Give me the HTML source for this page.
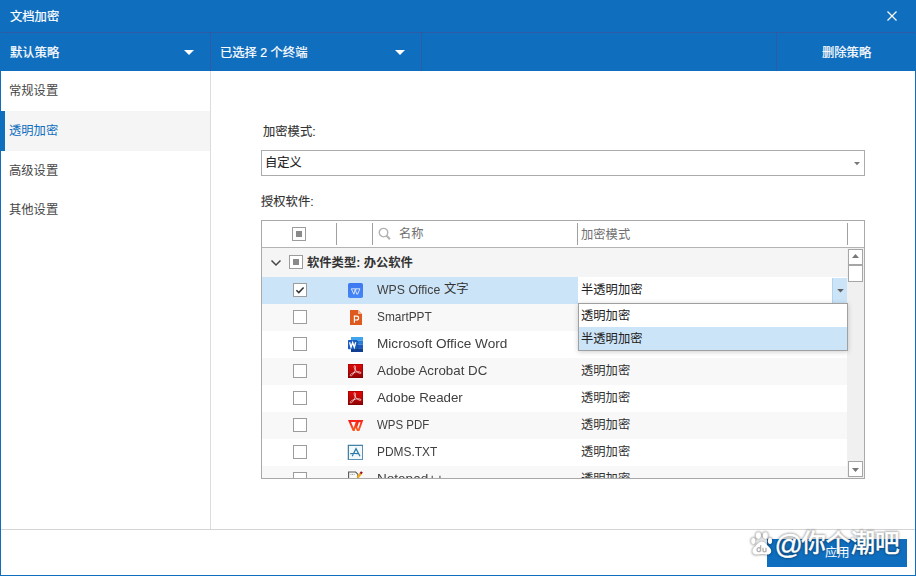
<!DOCTYPE html>
<html lang="zh-CN">
<head>
<meta charset="utf-8">
<title>文档加密</title>
<style>
html,body{margin:0;padding:0;}
body{width:916px;height:576px;overflow:hidden;background:#fff;position:relative;font-family:"Liberation Sans",sans-serif;}
.a{position:absolute;display:block;}
svg.a{overflow:visible;}
.lt{white-space:nowrap;font-family:"Liberation Sans",sans-serif;}
svg text{font-family:"Liberation Sans","Noto Sans CJK SC",sans-serif;white-space:pre;}
</style>
</head>
<body>
<div class="a" style="left:0px;top:0px;width:916px;height:71px;background:#106ebe;"></div>
<div class="a" style="left:1px;top:32px;width:914px;height:1px;background:#2d5ba6;"></div>
<div class="a" style="left:210px;top:33px;width:1px;height:38px;background:#2d5ba6;"></div>
<div class="a" style="left:421px;top:33px;width:1px;height:38px;background:#2d5ba6;"></div>
<div class="a" style="left:776px;top:33px;width:1px;height:38px;background:#2d5ba6;"></div>
<div class="a" style="left:0px;top:71px;width:1px;height:505px;background:#106ebe;"></div>
<div class="a" style="left:915px;top:71px;width:1px;height:505px;background:#106ebe;"></div>
<div class="a" style="left:0px;top:575px;width:916px;height:1px;background:#106ebe;"></div>
<svg class="a" style="left:10.0px;top:8.90px" width="50.0" height="17.2"><text x="0" y="12.3" font-size="12.3" fill="#fff" stroke="#fff" stroke-width="0.22">文档加密</text></svg>
<svg class="a" style="left:885px;top:9px" width="14" height="14"><path d="M2.5 2.5L11.5 11.5M11.5 2.5L2.5 11.5" stroke="#fff" stroke-width="1.2" fill="none"/></svg>
<svg class="a" style="left:10.0px;top:44.60px" width="50.0" height="17.2"><text x="0" y="12.3" font-size="12.3" fill="#fff" stroke="#fff" stroke-width="0.22">默认策略</text></svg>
<svg class="a" style="left:184px;top:50px" width="10" height="5"><path d="M0 0H10L5 5Z" fill="#fff"/></svg>
<svg class="a" style="left:220.0px;top:44.60px" width="89.5" height="17.2"><text x="0" y="12.3" font-size="12.3" fill="#fff" stroke="#fff" stroke-width="0.22">已选择 2 个终端</text></svg>
<svg class="a" style="left:395px;top:50px" width="10" height="5"><path d="M0 0H10L5 5Z" fill="#fff"/></svg>
<svg class="a" style="left:822.0px;top:44.60px" width="50.0" height="17.2"><text x="0" y="12.3" font-size="12.3" fill="#fff" stroke="#fff" stroke-width="0.22">删除策略</text></svg>
<div class="a" style="left:210px;top:71px;width:1px;height:458px;background:#dcdcdc;"></div>
<div class="a" style="left:1px;top:111px;width:209px;height:40px;background:#f5f5f5;"></div>
<div class="a" style="left:1px;top:111px;width:4px;height:40px;background:#106ebe;"></div>
<svg class="a" style="left:9.0px;top:83.00px" width="50.0" height="17.2"><text x="0" y="12.3" font-size="12.3" fill="#464646">常规设置</text></svg>
<svg class="a" style="left:9.0px;top:122.70px" width="50.0" height="17.2"><text x="0" y="12.3" font-size="12.3" fill="#106ebe">透明加密</text></svg>
<svg class="a" style="left:9.0px;top:162.70px" width="50.0" height="17.2"><text x="0" y="12.3" font-size="12.3" fill="#464646">高级设置</text></svg>
<svg class="a" style="left:9.0px;top:202.40px" width="50.0" height="17.2"><text x="0" y="12.3" font-size="12.3" fill="#464646">其他设置</text></svg>
<svg class="a" style="left:263.0px;top:124.00px" width="54.3" height="17.2"><text x="0" y="12.3" font-size="12.3" fill="#333" stroke="#333" stroke-width="0.12">加密模式:</text></svg>
<div class="a" style="left:261px;top:150px;width:604px;height:26px;background:#fff;border:1px solid #ababab;box-sizing:border-box;"></div>
<svg class="a" style="left:265.0px;top:155.00px" width="38.0" height="17.2"><text x="0" y="12.3" font-size="12.3" fill="#222" stroke="#222" stroke-width="0.1">自定义</text></svg>
<svg class="a" style="left:854px;top:161.8px" width="6" height="4"><path d="M0 0H6L3 3.2Z" fill="#787878"/></svg>
<svg class="a" style="left:261.0px;top:194.00px" width="54.3" height="17.2"><text x="0" y="12.3" font-size="12.3" fill="#333" stroke="#333" stroke-width="0.12">授权软件:</text></svg>
<div class="a" style="left:261px;top:220px;width:604px;height:259px;background:#fff;border:1px solid #a9a9a9;box-sizing:border-box;"></div>
<div class="a" style="left:262px;top:247px;width:602px;height:1px;background:#b4b4b4;"></div>
<div class="a" style="left:336px;top:223px;width:1px;height:22px;background:#a0a0a0;"></div>
<div class="a" style="left:372px;top:223px;width:1px;height:22px;background:#a0a0a0;"></div>
<div class="a" style="left:577px;top:223px;width:1px;height:22px;background:#a0a0a0;"></div>
<div class="a" style="left:847px;top:223px;width:1px;height:22px;background:#a0a0a0;"></div>
<svg class="a" style="left:292px;top:227px" width="14" height="14"><rect x="0.5" y="0.5" width="13" height="13" fill="#fff" stroke="#9c9c9c"/><rect x="4" y="4" width="6" height="6" fill="#8a8a8a"/></svg>
<svg class="a" style="left:378.3px;top:227px" width="14" height="14"><circle cx="5.5" cy="5.6" r="4.25" fill="none" stroke="#b2b2b2" stroke-width="1.4"/><path d="M8.6 8.8L11.9 12.2" stroke="#b2b2b2" stroke-width="2.1"/></svg>
<svg class="a" style="left:399.2px;top:226.00px" width="26.0" height="17.2"><text x="0" y="12.3" font-size="12.3" fill="#707070">名称</text></svg>
<svg class="a" style="left:581.2px;top:226.90px" width="50.0" height="17.2"><text x="0" y="12.3" font-size="12.3" fill="#707070">加密模式</text></svg>
<div class="a" style="left:262px;top:248px;width:585px;height:29px;background:#f5f5f5;"></div>
<svg class="a" style="left:270px;top:258px" width="12" height="9"><path d="M1.5 2.4L6 7.1L10.5 2.4" stroke="#444" stroke-width="1.4" fill="none"/></svg>
<svg class="a" style="left:289px;top:255px" width="14" height="14"><rect x="0.5" y="0.5" width="13" height="13" fill="#fff" stroke="#9c9c9c"/><rect x="4" y="4" width="6" height="6" fill="#8a8a8a"/></svg>
<svg class="a" style="left:307.0px;top:254.75px" width="105.0" height="17.2"><text x="0" y="12.3" font-size="12.3" font-weight="bold" fill="#333">软件类型: 办公软件</text></svg>
<div class="a" style="left:262px;top:277px;width:585px;height:201px;overflow:hidden">
<div class="a" style="left:0px;top:0px;width:585px;height:27px;background:#cce4f7;"></div>
<svg class="a" style="left:31px;top:6px" width="14" height="14"><rect x="0.5" y="0.5" width="13" height="13" fill="#fff" stroke="#9c9c9c"/><path d="M3.4 7.2L5.8 9.6L10.6 4.4" stroke="#333" stroke-width="1.5" fill="none"/></svg>
<svg class="a" style="left:86px;top:0px" width="17" height="27" viewBox="0 0 17 27"><defs><linearGradient id="gw" x1="0" y1="0" x2="0" y2="1"><stop offset="0" stop-color="#3c78f0"/><stop offset="1" stop-color="#4686f6"/></linearGradient></defs><rect x="0" y="6" width="15" height="15" rx="1.8" fill="url(#gw)"/><path d="M3.3 11.8H7.4L5.9 17.2ZM7.9 11.8H11.9L9.6 17.2H8.9L7.6 13.8Z" fill="none" stroke="#fff" stroke-width=".95" stroke-linejoin="round" opacity=".82"/></svg>
<span class="a lt" style="left:115.3px;top:6.40px;font-size:13px;line-height:13px;color:#404040;transform:scaleX(0.9453);transform-origin:0 0;">WPS Office</span>
<svg class="a" style="left:182.2px;top:4.15px" width="26.0" height="17.2"><text x="0" y="12.3" font-size="12.3" fill="#333">文字</text></svg>
<div class="a" style="left:0px;top:27px;width:585px;height:27px;background:#f8f8f8;"></div>
<svg class="a" style="left:31px;top:33px" width="14" height="14"><rect x="0.5" y="0.5" width="13" height="13" fill="#fff" stroke="#9c9c9c"/></svg>
<svg class="a" style="left:86px;top:27px" width="17" height="27" viewBox="0 0 17 27"><path d="M2 6H10L14 10V21H2Z" fill="#df5a1f"/><path d="M10 6L14 10H10Z" fill="#f4b79b"/><path d="M6.4 18.8V12.1H8.6C10 12.1 10.6 13 10.6 14 C10.6 15.1 9.9 16 8.6 16H6.6" fill="none" stroke="#fff" stroke-width="1.15"/></svg>
<span class="a lt" style="left:115.3px;top:33.40px;font-size:13px;line-height:13px;color:#404040;transform:scaleX(0.9140);transform-origin:0 0;">SmartPPT</span>
<div class="a" style="left:0px;top:54px;width:585px;height:27px;background:#fff;"></div>
<svg class="a" style="left:31px;top:60px" width="14" height="14"><rect x="0.5" y="0.5" width="13" height="13" fill="#fff" stroke="#9c9c9c"/></svg>
<svg class="a" style="left:86px;top:54px" width="17" height="27" viewBox="0 0 17 27"><rect x="3" y="6" width="12" height="3.8" fill="#41a5ee"/><rect x="3" y="9.8" width="12" height="3.7" fill="#2b7cd3"/><rect x="3" y="13.5" width="12" height="3.7" fill="#185abd"/><rect x="3" y="17.2" width="12" height="3.8" fill="#103f91"/><rect x="3" y="9.6" width="7.2" height="9.4" fill="#0a2f6e" opacity=".35"/><rect x="0" y="9" width="9.3" height="9.2" rx=".6" fill="#1b5cbe"/><path d="M1.6 11.2L3 16.2L4.65 11.6L6.3 16.2L7.7 11.2" fill="none" stroke="#fff" stroke-width="1.35" stroke-linejoin="miter"/></svg>
<span class="a lt" style="left:115.3px;top:60.40px;font-size:13px;line-height:13px;color:#404040;transform:scaleX(1.0467);transform-origin:0 0;">Microsoft Office Word</span>
<div class="a" style="left:0px;top:81px;width:585px;height:27px;background:#f8f8f8;"></div>
<svg class="a" style="left:31px;top:87px" width="14" height="14"><rect x="0.5" y="0.5" width="13" height="13" fill="#fff" stroke="#9c9c9c"/></svg>
<svg class="a" style="left:86px;top:81px" width="17" height="27" viewBox="0 0 17 27"><defs><linearGradient id="ga" x1="0" y1="0" x2="0" y2="1"><stop offset="0" stop-color="#e50505"/><stop offset=".55" stop-color="#b80a0a"/><stop offset="1" stop-color="#8c0202"/></linearGradient></defs><rect x="0" y="6" width="15" height="14" fill="url(#ga)"/><rect x=".5" y="6.5" width="14" height="13" fill="none" stroke="#7a0000" stroke-opacity=".45"/><path d="M6.7 7.7C7.8 7.6 7.6 10.4 7.1 12.3C6.1 15.6 3.4 18.7 2.4 17.7C1.6 16.7 4 15 7.5 14.1C10 13.5 12.9 13.6 12.9 14.9C12.9 16.1 10 14.9 8.1 12.9C6.3 11 5.5 7.8 6.7 7.7Z" fill="none" stroke="#fff" stroke-width=".8" opacity=".82"/></svg>
<span class="a lt" style="left:115.3px;top:87.40px;font-size:13px;line-height:13px;color:#404040;transform:scaleX(1.0241);transform-origin:0 0;">Adobe Acrobat DC</span>
<svg class="a" style="left:319.2px;top:86.05px" width="50.0" height="17.2"><text x="0" y="12.3" font-size="12.3" fill="#333">透明加密</text></svg>
<div class="a" style="left:0px;top:108px;width:585px;height:27px;background:#fff;"></div>
<svg class="a" style="left:31px;top:114px" width="14" height="14"><rect x="0.5" y="0.5" width="13" height="13" fill="#fff" stroke="#9c9c9c"/></svg>
<svg class="a" style="left:86px;top:108px" width="17" height="27" viewBox="0 0 17 27"><defs><linearGradient id="ga" x1="0" y1="0" x2="0" y2="1"><stop offset="0" stop-color="#e50505"/><stop offset=".55" stop-color="#b80a0a"/><stop offset="1" stop-color="#8c0202"/></linearGradient></defs><rect x="0" y="6" width="15" height="14" fill="url(#ga)"/><rect x=".5" y="6.5" width="14" height="13" fill="none" stroke="#7a0000" stroke-opacity=".45"/><path d="M6.7 7.7C7.8 7.6 7.6 10.4 7.1 12.3C6.1 15.6 3.4 18.7 2.4 17.7C1.6 16.7 4 15 7.5 14.1C10 13.5 12.9 13.6 12.9 14.9C12.9 16.1 10 14.9 8.1 12.9C6.3 11 5.5 7.8 6.7 7.7Z" fill="none" stroke="#fff" stroke-width=".8" opacity=".82"/></svg>
<span class="a lt" style="left:115.3px;top:114.40px;font-size:13px;line-height:13px;color:#404040;transform:scaleX(1.0234);transform-origin:0 0;">Adobe Reader</span>
<svg class="a" style="left:319.2px;top:113.05px" width="50.0" height="17.2"><text x="0" y="12.3" font-size="12.3" fill="#333">透明加密</text></svg>
<div class="a" style="left:0px;top:135px;width:585px;height:27px;background:#f8f8f8;"></div>
<svg class="a" style="left:31px;top:141px" width="14" height="14"><rect x="0.5" y="0.5" width="13" height="13" fill="#fff" stroke="#9c9c9c"/></svg>
<svg class="a" style="left:86px;top:135px" width="17" height="27" viewBox="0 0 17 27"><defs><linearGradient id="gp" x1="0" y1="0" x2="0.3" y2="1"><stop offset="0" stop-color="#f5141a"/><stop offset="1" stop-color="#ff5a1c"/></linearGradient></defs><path fill-rule="evenodd" fill="url(#gp)" d="M0 8H10.6L6.6 19H4.7ZM3 10.1H7.7L5.65 16Z"/><path fill-rule="evenodd" fill="url(#gp)" d="M9.4 8H15.3L11.4 19H9L7.5 15.2ZM10.9 10.2L9.2 15.2L10.1 17.2L12.6 10.2Z"/></svg>
<span class="a lt" style="left:115.3px;top:141.40px;font-size:13px;line-height:13px;color:#404040;transform:scaleX(0.8831);transform-origin:0 0;">WPS PDF</span>
<svg class="a" style="left:319.2px;top:140.05px" width="50.0" height="17.2"><text x="0" y="12.3" font-size="12.3" fill="#333">透明加密</text></svg>
<div class="a" style="left:0px;top:162px;width:585px;height:27px;background:#fff;"></div>
<svg class="a" style="left:31px;top:168px" width="14" height="14"><rect x="0.5" y="0.5" width="13" height="13" fill="#fff" stroke="#9c9c9c"/></svg>
<svg class="a" style="left:86px;top:162px" width="17" height="27" viewBox="0 0 17 27"><rect x=".5" y="6.5" width="14" height="14" fill="#f3f8fb" stroke="#5b93b6"/><path d="M.3 21V6.3H15" fill="none" stroke="#3f7da5" stroke-width="1.1"/><path d="M4.2 17.2L8 9.6L12 17.2M2.2 14.6C5 14.2 8 14.3 10.6 14.6" fill="none" stroke="#2a78a8" stroke-width="1.25"/></svg>
<span class="a lt" style="left:115.3px;top:168.40px;font-size:13px;line-height:13px;color:#404040;transform:scaleX(0.9160);transform-origin:0 0;">PDMS.TXT</span>
<svg class="a" style="left:319.2px;top:167.05px" width="50.0" height="17.2"><text x="0" y="12.3" font-size="12.3" fill="#333">透明加密</text></svg>
<div class="a" style="left:0px;top:189px;width:585px;height:27px;background:#f8f8f8;"></div>
<svg class="a" style="left:31px;top:195px" width="14" height="14"><rect x="0.5" y="0.5" width="13" height="13" fill="#fff" stroke="#9c9c9c"/></svg>
<svg class="a" style="left:86px;top:189px" width="17" height="27" viewBox="0 0 17 27"><path d="M.6 12V6H7.6L9.8 8.2V12" fill="#fafafa" stroke="#555" stroke-width="1.1"/><path d="M2.4 8.4H6.6" stroke="#999" stroke-width="1" stroke-dasharray="1 .7"/><path d="M9.6 11.6L12.8 7.4" stroke="#f0a81e" stroke-width="2.4"/><path d="M12.6 7.6L13.9 5.8" stroke="#a00d1a" stroke-width="2.2"/></svg>
<span class="a lt" style="left:115.3px;top:195.40px;font-size:13px;line-height:13px;color:#404040;transform:scaleX(1.0414);transform-origin:0 0;">Notepad++</span>
<svg class="a" style="left:319.2px;top:194.05px" width="50.0" height="17.2"><text x="0" y="12.3" font-size="12.3" fill="#333">透明加密</text></svg>
</div>
<div class="a" style="left:578px;top:277px;width:269px;height:27px;background:#fff;"></div>
<svg class="a" style="left:581.2px;top:282.00px" width="62.0" height="17.2"><text x="0" y="12.3" font-size="12.3" fill="#222">半透明加密</text></svg>
<div class="a" style="left:832px;top:278px;width:15px;height:26px;background:#cce4f7;border-left:1px solid #b3d3ee;box-sizing:border-box;"></div>
<svg class="a" style="left:836.5px;top:288.5px" width="7" height="4"><path d="M0.2 0H6.8L3.5 3.4Z" fill="#606060"/></svg>
<div class="a" style="left:847px;top:248px;width:17px;height:230px;background:#f0f0f0;"></div>
<div class="a" style="left:848px;top:249px;width:15px;height:16px;background:#fff;border:1px solid #a6a6a6;box-sizing:border-box;"></div>
<svg class="a" style="left:852px;top:254px" width="7" height="4"><path d="M0 4H7L3.5 0Z" fill="#777"/></svg>
<div class="a" style="left:848px;top:265px;width:15px;height:17px;background:#fff;border:1px solid #a6a6a6;box-sizing:border-box;"></div>
<div class="a" style="left:848px;top:461px;width:15px;height:16px;background:#fff;border:1px solid #a6a6a6;box-sizing:border-box;"></div>
<svg class="a" style="left:852px;top:468px" width="7" height="4"><path d="M0 0H7L3.5 4Z" fill="#777"/></svg>
<div class="a" style="left:578px;top:303px;width:270px;height:48px;background:#fff;border:1px solid #a0a0a0;box-sizing:border-box;box-shadow:0 1px 5px rgba(0,0,0,.2);"></div>
<div class="a" style="left:579px;top:327px;width:268px;height:23px;background:#cce4f7;"></div>
<svg class="a" style="left:581.2px;top:307.90px" width="50.0" height="17.2"><text x="0" y="12.3" font-size="12.3" fill="#222">透明加密</text></svg>
<svg class="a" style="left:581.2px;top:330.90px" width="62.0" height="17.2"><text x="0" y="12.3" font-size="12.3" fill="#222">半透明加密</text></svg>
<div class="a" style="left:1px;top:529px;width:914px;height:1px;background:#d4d4d4;"></div>
<div class="a" style="left:767px;top:539px;width:140px;height:28px;background:#106ebe;"></div>
<svg class="a" style="left:825.0px;top:544.85px" width="26.0" height="17.2"><text x="0" y="12.3" font-size="12.3" fill="#fff">应用</text></svg>
<svg class="a" style="left:0;top:0;pointer-events:none" width="916" height="576" viewBox="0 0 916 576"><defs><filter id="wb" x="-5%" y="-20%" width="110%" height="140%"><feGaussianBlur stdDeviation="1"/></filter></defs><g filter="url(#wb)" opacity=".36"><g fill="#000" stroke="#000" stroke-width="1.6"><ellipse cx="758.4" cy="535.6" rx="2.5" ry="3.3"/><ellipse cx="765.3" cy="535.6" rx="2.5" ry="3.3"/><ellipse cx="753.3" cy="541" rx="2.1" ry="2.9"/><ellipse cx="770" cy="541" rx="2.1" ry="2.9"/><path d="M761.8 541.6C764.6 541.6 766 544 768 546C770.2 548 771.4 549.6 771.2 551.4C770.9 553.8 768.6 554.8 766.2 554.5C764.4 554.3 763.4 554 761.8 554C760.2 554 759.2 554.3 757.4 554.5C755 554.8 752.8 553.8 752.5 551.4C752.3 549.6 753.4 548 755.6 546C757.6 544 759 541.6 761.8 541.6Z"/></g><text x="774.6" y="553.5" font-size="28" fill="#000" stroke="#000" stroke-width="2" stroke-linejoin="round">@</text><text x="801.2" y="552.3" font-size="24.6" fill="#000" stroke="#000" stroke-width="2" stroke-linejoin="round">你个潮吧</text></g><g fill="#fff"><ellipse cx="758.4" cy="535.6" rx="2.5" ry="3.3"/><ellipse cx="765.3" cy="535.6" rx="2.5" ry="3.3"/><ellipse cx="753.3" cy="541" rx="2.1" ry="2.9"/><ellipse cx="770" cy="541" rx="2.1" ry="2.9"/><path d="M761.8 541.6C764.6 541.6 766 544 768 546C770.2 548 771.4 549.6 771.2 551.4C770.9 553.8 768.6 554.8 766.2 554.5C764.4 554.3 763.4 554 761.8 554C760.2 554 759.2 554.3 757.4 554.5C755 554.8 752.8 553.8 752.5 551.4C752.3 549.6 753.4 548 755.6 546C757.6 544 759 541.6 761.8 541.6Z"/></g><g fill="none" stroke="#b0b0b0" stroke-width="1.3"><path d="M760.6 545.2V551.6M760.6 549.6A1.8 2 0 1 0 760.6 549.7"/><path d="M763 547.8V550.4A1.5 1.4 0 0 0 766 550.4V547.8M766 550V551.8"/></g><text x="774.6" y="553.5" font-size="28" fill="#fff" stroke="#fff" stroke-width="0.36">@</text><text x="801.2" y="552.3" font-size="24.6" fill="#fff" stroke="#fff" stroke-width="0.54">你个潮吧</text></svg>
</body>
</html>
